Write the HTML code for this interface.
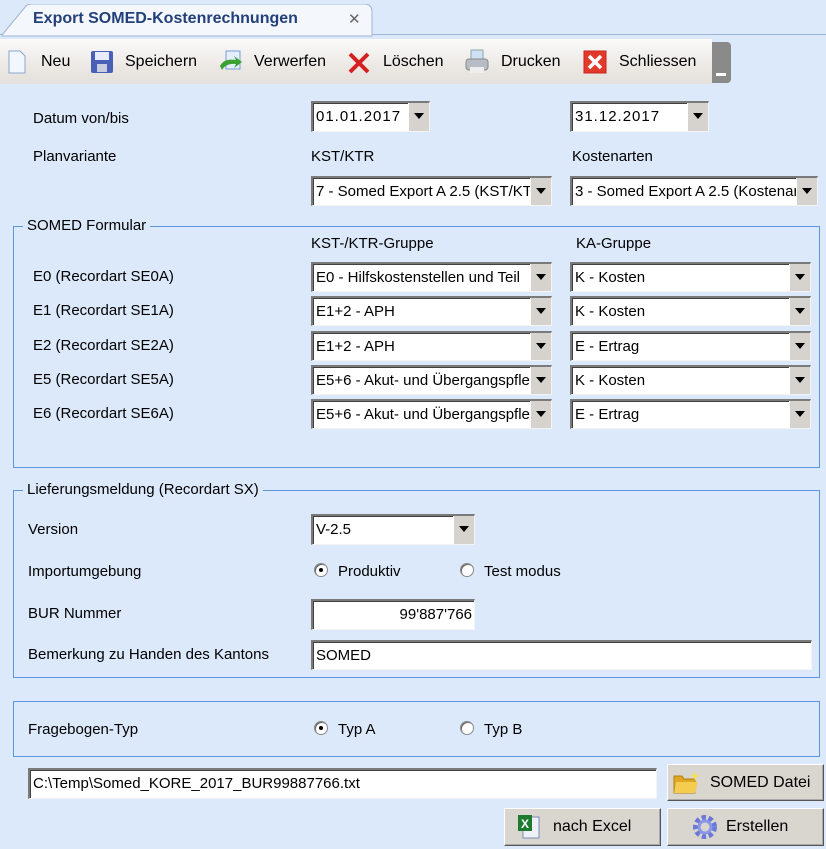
<!DOCTYPE html>
<html><head><meta charset="utf-8"><style>
*{box-sizing:border-box;margin:0;padding:0}
body{width:826px;height:849px;background:#dce9fb;font-family:"Liberation Sans",sans-serif;font-size:15px;color:#000;position:relative;overflow:hidden}
.a{position:absolute;white-space:nowrap}
.lbl{position:absolute;white-space:nowrap;line-height:18px}
.fld{position:absolute;background:#fff;border-top:2px solid #7a7a7a;border-left:2px solid #7a7a7a;border-bottom:1px solid #f4f4f4;border-right:1px solid #f4f4f4;box-shadow:inset 1px 1px 0 #404040;overflow:hidden;white-space:nowrap;line-height:27px;padding-left:3px;font-size:15px}
.cb .btn{position:absolute;right:0;top:0;bottom:0;width:21px;background:#d6d3ce;border-left:1px solid #fff}
.cb .btn:after{content:"";position:absolute;left:5px;top:10px;border-left:5px solid transparent;border-right:5px solid transparent;border-top:6px solid #000}
.grp{position:absolute;border:1px solid #5a95e6}
.leg{position:absolute;background:#dce9fb;padding:0 4px;line-height:18px;white-space:nowrap}
.rad{position:absolute;width:14px;height:14px;border-radius:50%;background:#fff;border:1px solid #888;box-shadow:inset 1px 1px 0 #666}
.rad.on:after{content:"";position:absolute;left:4px;top:4px;width:4px;height:4px;border-radius:50%;background:#000}
.pb{position:absolute;background:#d9d5cf;border:1px solid #fff;border-right-color:#555;border-bottom-color:#555;box-shadow:inset -1px -1px 0 #aaa;font-size:16px;line-height:36px;white-space:nowrap}
</style></head><body>
<div class="a" style="left:0;top:0;width:826px;height:35px;background:#dce9fb;border-bottom:1px solid #9fb5d4"></div>
<svg class="a" style="left:0;top:4px" width="380" height="33"><path d="M2 31 L26 2 Q28 0 32 0 L364 0 Q372 0 372 8 L372 32 L2 32Z" fill="#f4f7fc" stroke="#9fb5d4"/></svg>
<div class="a" style="left:33px;top:10px;font-weight:bold;color:#23407a;font-size:16px">Export SOMED-Kostenrechnungen</div>
<div class="a" style="left:348px;top:10px;color:#666;font-size:15px">✕</div>
<div class="a" style="left:0;top:39px;width:712px;height:45px;background:linear-gradient(#fbfaf9,#ece9e5 60%,#e4e0dc)"></div>
<div class="a" style="left:712px;top:42px;width:19px;height:41px;background:#8a8a8a;border-radius:0 4px 4px 0"></div>
<div class="a" style="left:716px;top:68px;color:#fff;font-size:10px">▬</div>
<svg class="a" style="left:7px;top:50px" width="20" height="24"><path d="M2 1 H13 L18 6 V23 H2Z" fill="#f2f7ff" stroke="#8aa6cc"/></svg>
<div class="a" style="left:41px;top:53px;font-size:16px">Neu</div>
<svg class="a" style="left:90px;top:50px" width="24" height="24"><rect x="1" y="1" width="22" height="22" rx="2" fill="#4a5fb8"/><rect x="5" y="2" width="14" height="8" fill="#e8ecf8"/><rect x="7" y="14" width="10" height="8" fill="#c8cde0"/></svg>
<div class="a" style="left:125px;top:53px;font-size:16px">Speichern</div>
<svg class="a" style="left:218px;top:50px" width="26" height="24"><rect x="8" y="1" width="14" height="18" fill="#e4eefc" stroke="#7a9cd0"/><path d="M2 16 Q6 8 18 10 L16 6 L24 12 L16 18 L18 14 Q8 13 4 20Z" fill="#3aa030"/></svg>
<div class="a" style="left:254px;top:53px;font-size:16px">Verwerfen</div>
<svg class="a" style="left:348px;top:52px" width="22" height="22"><path d="M2 2 L20 20 M20 2 L2 20" stroke="#d42020" stroke-width="4"/></svg>
<div class="a" style="left:383px;top:53px;font-size:16px">Löschen</div>
<svg class="a" style="left:465px;top:49px" width="24" height="26"><rect x="6" y="1" width="12" height="10" fill="#cfe0f4" stroke="#8aa"/><rect x="1" y="10" width="22" height="11" rx="3" fill="#b8bcc4" stroke="#888"/><rect x="5" y="18" width="14" height="6" fill="#eee"/></svg>
<div class="a" style="left:501px;top:53px;font-size:16px">Drucken</div>
<svg class="a" style="left:583px;top:50px" width="24" height="24"><rect x="1" y="1" width="22" height="22" fill="#e23a2a" stroke="#c22"/><path d="M6 6 L18 18 M18 6 L6 18" stroke="#fff" stroke-width="3.5"/></svg>
<div class="a" style="left:619px;top:53px;font-size:16px">Schliessen</div>

<div class="lbl" style="left:33px;top:110px">Datum von/bis</div>
<div class="fld cb" style="left:311px;top:101px;width:119px;height:31px;letter-spacing:1px">01.01.2017<div class="btn"></div></div>
<div class="fld cb" style="left:570px;top:101px;width:139px;height:31px;letter-spacing:1px">31.12.2017<div class="btn"></div></div>
<div class="lbl" style="left:33px;top:148px">Planvariante</div>
<div class="lbl" style="left:311px;top:148px">KST/KTR</div>
<div class="lbl" style="left:572px;top:148px">Kostenarten</div>
<div class="fld cb" style="left:311px;top:176px;width:241px;height:30px">7 - Somed Export A 2.5 (KST/KTR)<div class="btn"></div></div>
<div class="fld cb" style="left:570px;top:176px;width:248px;height:30px">3 - Somed Export A 2.5 (Kostenarten)<div class="btn"></div></div>

<div class="grp" style="left:13px;top:226px;width:807px;height:242px"></div>
<div class="leg" style="left:23px;top:217px">SOMED Formular</div>
<div class="lbl" style="left:311px;top:235px">KST-/KTR-Gruppe</div>
<div class="lbl" style="left:576px;top:235px">KA-Gruppe</div>

<div class="lbl" style="left:33px;top:268px">E0 (Recordart SE0A)</div>
<div class="fld cb" style="left:311px;top:262px;width:241px;height:30px">E0 - Hilfskostenstellen und Teil<div class="btn"></div></div>
<div class="fld cb" style="left:570px;top:262px;width:241px;height:30px">K - Kosten<div class="btn"></div></div>
<div class="lbl" style="left:33px;top:302px">E1 (Recordart SE1A)</div>
<div class="fld cb" style="left:311px;top:296px;width:241px;height:30px">E1+2 - APH<div class="btn"></div></div>
<div class="fld cb" style="left:570px;top:296px;width:241px;height:30px">K - Kosten<div class="btn"></div></div>
<div class="lbl" style="left:33px;top:337px">E2 (Recordart SE2A)</div>
<div class="fld cb" style="left:311px;top:331px;width:241px;height:30px">E1+2 - APH<div class="btn"></div></div>
<div class="fld cb" style="left:570px;top:331px;width:241px;height:30px">E - Ertrag<div class="btn"></div></div>
<div class="lbl" style="left:33px;top:371px">E5 (Recordart SE5A)</div>
<div class="fld cb" style="left:311px;top:365px;width:241px;height:30px">E5+6 - Akut- und Übergangspflege<div class="btn"></div></div>
<div class="fld cb" style="left:570px;top:365px;width:241px;height:30px">K - Kosten<div class="btn"></div></div>
<div class="lbl" style="left:33px;top:405px">E6 (Recordart SE6A)</div>
<div class="fld cb" style="left:311px;top:399px;width:241px;height:30px">E5+6 - Akut- und Übergangspflege<div class="btn"></div></div>
<div class="fld cb" style="left:570px;top:399px;width:241px;height:30px">E - Ertrag<div class="btn"></div></div>

<div class="grp" style="left:13px;top:490px;width:807px;height:188px"></div>
<div class="leg" style="left:23px;top:481px">Lieferungsmeldung (Recordart SX)</div>
<div class="lbl" style="left:28px;top:521px">Version</div>
<div class="fld cb" style="left:311px;top:514px;width:164px;height:31px">V-2.5<div class="btn"></div></div>
<div class="lbl" style="left:28px;top:563px">Importumgebung</div>
<div class="rad on" style="left:314px;top:563px"></div>
<div class="lbl" style="left:338px;top:563px">Produktiv</div>
<div class="rad" style="left:460px;top:563px"></div>
<div class="lbl" style="left:484px;top:563px">Test modus</div>
<div class="lbl" style="left:28px;top:605px">BUR Nummer</div>
<div class="fld" style="left:311px;top:599px;width:164px;height:31px;text-align:right;padding-right:2px">99'887'766</div>
<div class="lbl" style="left:28px;top:646px">Bemerkung zu Handen des Kantons</div>
<div class="fld" style="left:311px;top:640px;width:501px;height:30px">SOMED</div>

<div class="grp" style="left:13px;top:701px;width:807px;height:56px"></div>
<div class="lbl" style="left:28px;top:721px">Fragebogen-Typ</div>
<div class="rad on" style="left:314px;top:721px"></div>
<div class="lbl" style="left:338px;top:721px">Typ A</div>
<div class="rad" style="left:460px;top:721px"></div>
<div class="lbl" style="left:484px;top:721px">Typ B</div>

<div class="fld" style="left:28px;top:768px;width:629px;height:31px">C:\Temp\Somed_KORE_2017_BUR99887766.txt</div>
<div class="pb" style="left:667px;top:764px;width:157px;height:37px;padding-left:42px">SOMED Datei</div>
<svg class="a" style="left:673px;top:770px" width="28" height="24"><path d="M1 6 H9 L11 9 H22 V23 H1Z" fill="#e0a820" stroke="#b08010"/><path d="M3 12 H25 L22 23 H1Z" fill="#f4cc50"/><path d="M22 1 L23 5 L27 6 L23 7 L22 11 L21 7 L17 6 L21 5Z" fill="#ffe040"/></svg>
<div class="pb" style="left:504px;top:808px;width:157px;height:38px;padding-left:48px">nach Excel</div>
<svg class="a" style="left:517px;top:814px" width="24" height="26"><rect x="6" y="3" width="16" height="21" fill="#eef2f8" stroke="#7a8cb0"/><rect x="1" y="1" width="14" height="16" fill="#1e7a2e"/><text x="4" y="14" font-size="12" font-weight="bold" fill="#fff" font-family="Liberation Sans">X</text></svg>
<div class="pb" style="left:667px;top:808px;width:157px;height:38px;padding-left:58px">Erstellen</div>
<svg class="a" style="left:693px;top:815px" width="24" height="24"><circle cx="12" cy="12" r="9" fill="none" stroke="#6a78d8" stroke-width="6" stroke-dasharray="4 2.5"/><circle cx="12" cy="12" r="6" fill="none" stroke="#8a96e8" stroke-width="3"/></svg>
</body></html>
